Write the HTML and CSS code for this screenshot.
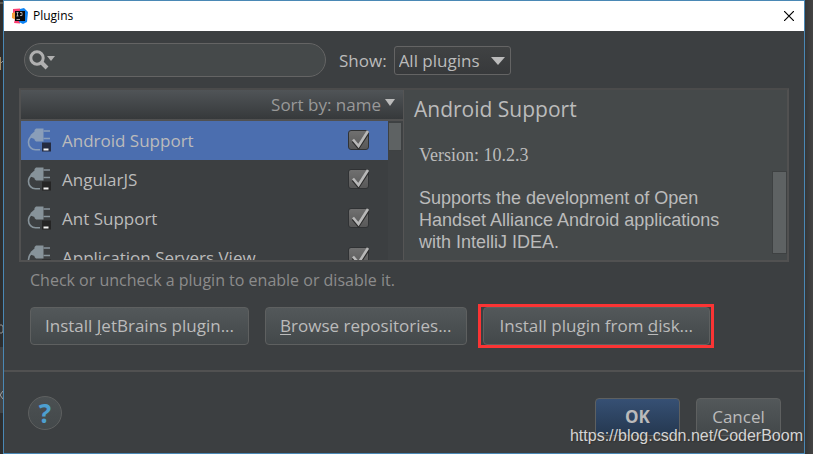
FILE: index.html
```
<!DOCTYPE html>
<html lang="en">
<head>
<meta charset="utf-8">
<title>Plugins</title>
<meta name="viewport" content="width=device-width, initial-scale=1">
<link rel="stylesheet" href="styles.css">
</head>
<body>
<svg class="symbols" aria-hidden="true">
  <symbol id="plug" viewBox="0 0 24 24">
    <path d="M5 8C2.500 9.500 1.500 12 1.500 14.500C1.500 18.500 4.500 21.700 8.500 21.700H13" fill="none" stroke="currentColor" stroke-width="1.600"/>
    <path d="M3.500 7L7.500 3.500V2L9 0.500H16.500V13.500H9L7.500 12V11L3.500 9.500Z" fill="currentColor"/>
    <path d="M16.500 3H23M16.500 10.500H23" stroke="currentColor" stroke-width="1.500"/>
    <path d="M15 14.500H24V23.500H15Z"/>
    <path d="M16.500 20.500H21.500V22.500H16.500Z" fill="#f2f2f2"/>
  </symbol>
  <symbol id="tick" viewBox="0 0 22 22">
    <path d="M5 11L10.500 17.500L20 3" fill="none" stroke="#2c2c2c" stroke-width="3"/>
    <path d="M5 9.500L10.500 16L20 1" fill="none" stroke="#b8b8b8" stroke-width="2.600"/>
  </symbol>
</svg>
<div class="desktop">
  <svg class="behind" viewBox="0 0 3 454" aria-hidden="true">
    <path d="M0 3H3" stroke="#8a8170"/>
    <path d="M0 57H1V70H0Z" fill="#a58b62"/>
    <path d="M1 63L3 61" stroke="#8f8f8f"/>
    <path d="M0 325H2L3 327V331L2 333H0" stroke="#8f8f8f" fill="none"/>
    <path d="M0 347H3V413H0Z" fill="#414345"/>
    <path d="M3 391L0 395L3 399" stroke="#a0a0a0" fill="none"/>
  </svg>
  <main class="window">
    <header class="titlebar">
      <svg class="logo" viewBox="0 0 16 16" aria-hidden="true">
        <path d="M1 1L8 0.500V15.500L2 15L3 11L0 9L1 6Z" fill="#fb3f72"/>
        <path d="M0 5L4 4V12L0 10Z" fill="#f8a13c"/>
        <path d="M8 1L12 0L16 4L15 14L11 16L7 14Z" fill="#0d83f4"/>
        <path d="M3 3H13V13H3Z" fill="#0a0a0a"/>
        <path d="M4.500 4.500H6.500M5.500 4.500V8M4.500 8H6.500M8 4.500H10V7.500H8M4.500 11.500H8" stroke="#ccc" stroke-width="0.800" fill="none"/>
      </svg>
      <h1>Plugins</h1>
      <button class="close" aria-label="Close"><svg viewBox="0 0 10 10"><path d="M0 0L10 10M10 0L0 10" stroke="#000" stroke-width="1.200"/></svg></button>
    </header>
    <div class="filters">
      <label class="search">
        <svg viewBox="0 0 28 20" aria-hidden="true"><circle cx="8" cy="8" r="6.200" fill="none" stroke="#b0b0b0" stroke-width="3"/><path d="M12 12L18 18" stroke="#b0b0b0" stroke-width="4"/><path d="M18 6H26L22 11Z" fill="#b0b0b0"/></svg>
        <input type="text" aria-label="Search plugins">
      </label>
      <label class="show" for="show">Show:</label>
      <span class="picker">
        <select id="show"><option>All plugins</option></select>
        <svg viewBox="0 0 14 8" aria-hidden="true"><path d="M0 0H14L7 8Z" fill="#bbb"/></svg>
      </span>
    </div>
    <section class="panes">
      <div class="plugins">
        <button class="sort">Sort by: name<svg viewBox="0 0 10 7" aria-hidden="true"><path d="M0 0H10L5 7Z" fill="#bbb"/></svg></button>
        <div class="scroller">
          <ul>
            <li class="selected"><svg class="plug"><use href="#plug"/></svg><label for="p1">Android Support</label><span class="check"><input type="checkbox" id="p1" checked><svg><use href="#tick"/></svg></span></li>
            <li><svg class="plug"><use href="#plug"/></svg><label for="p2">AngularJS</label><span class="check"><input type="checkbox" id="p2" checked><svg><use href="#tick"/></svg></span></li>
            <li><svg class="plug"><use href="#plug"/></svg><label for="p3">Ant Support</label><span class="check"><input type="checkbox" id="p3" checked><svg><use href="#tick"/></svg></span></li>
            <li><svg class="plug"><use href="#plug"/></svg><label for="p4">Application Servers View</label><span class="check"><input type="checkbox" id="p4" checked><svg><use href="#tick"/></svg></span></li>
          </ul>
          <div class="track"><div class="thumb"></div></div>
        </div>
      </div>
      <article class="detail">
        <div class="copy">
          <h2>Android Support</h2>
          <p class="version">Version: 10.2.3</p>
          <p class="about">Supports the development of Open Handset Alliance Android applications with IntelliJ IDEA.</p>
        </div>
        <div class="thumb"></div>
      </article>
    </section>
    <p class="hint">Check or uncheck a plugin to enable or disable it.</p>
    <div class="sources">
      <button class="btn"><span>Install <u>J</u>etBrains plugin...</span></button>
      <button class="btn"><span><u>B</u>rowse repositories...</span></button>
      <div class="marked"><button class="btn"><span>Install plugin from <u>d</u>isk...</span></button></div>
    </div>
    <footer>
      <button class="help" aria-label="Help">?</button>
      <button class="btn ok">OK</button>
      <button class="btn cancel">Cancel</button>
    </footer>
  </main>
  <div class="watermark">https://blog.csdn.net/CoderBoom</div>
</div>
</body>
</html>
```
FILE: styles.css
```
* { box-sizing: border-box; }
body {
  margin: 0;
  background: #3c3f41;
  color: #bbb;
  font: 17px/24px "Open Sans", "Noto Sans", sans-serif;
}
h1, h2, p, ul { margin: 0; padding: 0; font-weight: 400; }
button, input, select { font: inherit; color: inherit; margin: 0; }
svg { display: block; }
u { text-underline-offset: 2px; text-decoration-thickness: 1px; }
.symbols { position: absolute; width: 0; height: 0; }

.desktop {
  position: relative;
  display: flex;
  min-height: 100vh;
  padding-right: 8px;
  background: linear-gradient(to left, #444, #343637 8px);
}
.behind { width: 3px; height: 454px; background: #2d2e2f; }
.window {
  flex: 1;
  display: flex;
  flex-direction: column;
  border: 1px solid #4a88b5;
  background: #3c3f41;
}

.titlebar {
  display: flex;
  align-items: center;
  height: 30px;
  padding: 0 10px 0 8px;
  background: #fff;
  color: #000;
}
.logo { width: 16px; height: 16px; margin-right: 5px; }
.titlebar h1 { flex: 1; font-size: 12px; line-height: 16px; }
.close { padding: 0; border: 0; background: none; }
.close svg { width: 10px; height: 10px; }

.filters { display: flex; align-items: center; padding: 12px 20px 0; }
.search {
  display: flex;
  align-items: center;
  width: 302px;
  height: 34px;
  padding: 0 16px 0 4px;
  border: 1px solid #646464;
  border-radius: 17px;
  background: #45494a;
}
.search svg { width: 28px; height: 20px; flex: none; }
.search input { flex: 1; min-width: 0; border: 0; background: none; outline: 0; }
.show { margin: 2px 7px 0 13px; }
.picker { position: relative; margin-top: 1px; }
.picker select {
  display: block;
  width: 117px;
  height: 29px;
  padding: 0 0 0 4px;
  appearance: none;
  border: 1px solid #646464;
  border-radius: 3px;
  background: linear-gradient(#404243, #37393b);
}
.picker svg { position: absolute; right: 6px; top: 11px; width: 14px; height: 8px; pointer-events: none; }

.panes {
  display: flex;
  margin: 11px 15px 0;
  border: 2px solid #515151;
  border-top-color: #4b4b4b;
}
.plugins { width: 382px; display: flex; flex-direction: column; }
.sort {
  display: flex;
  justify-content: flex-end;
  align-items: center;
  height: 31px;
  padding: 0 8px 0 0;
  border: 0;
  border-bottom: 2px solid #515151;
  background: linear-gradient(#505457, #36393b);
  color: #999;
}
.sort svg { width: 10px; height: 7px; margin: 0 0 4px 4px; }
.scroller { display: flex; height: 139px; overflow: hidden; }
.scroller ul { flex: 1; list-style: none; }
.scroller li { display: flex; align-items: center; height: 39px; padding: 0 19px 0 6px; }
.scroller label { flex: 1; }
.selected { background: #4b6eaf; }
.plug { width: 24px; height: 24px; margin: 0 11px 1px 0; color: #87939a; fill: #252525; }
.selected .plug { color: #8a9eb9; fill: #252b40; }
.check { position: relative; margin-bottom: 1px; }
.check input {
  display: block;
  width: 21px;
  height: 20px;
  appearance: none;
  border: 1px solid #303234;
  border-radius: 3px;
  background: linear-gradient(#707070, #585858);
}
.check svg { position: absolute; left: 0; top: 0; width: 22px; height: 22px; pointer-events: none; }
.track { width: 15px; padding: 1px 1px 0 0; background: #3f4244; }
.thumb { width: 14px; background: #5e6263; border: 1px solid #3e4142; }
.track .thumb { height: 29px; }

.detail {
  flex: 1;
  display: flex;
  justify-content: space-between;
  align-items: flex-end;
  border-left: 1px solid #555;
  background: #45494a;
}
.copy { flex: 1; align-self: flex-start; padding: 4px 40px 0 10px; }
.copy h2 { font-size: 21px; line-height: 30px; }
.copy p { margin-left: 5px; }
.copy .version { margin-top: 20px; font: 18px/22px "Liberation Serif", serif; }
.copy .about { margin-top: 21px; font: 18px/22px "Liberation Sans", sans-serif; }
.detail .thumb { width: 15px; height: 83px; margin-bottom: 6px; }

.hint { margin: 6px 26px 0; font-size: 16px; color: #8c8c8c; }
.sources { display: flex; align-items: center; padding: 12px 26px 0; }
.btn {
  height: 38px;
  padding: 0 14px;
  border: 1px solid #5e6060;
  border-radius: 4px;
  background: linear-gradient(#53585a, #43484a);
  white-space: nowrap;
}
.sources > .btn { margin-right: 16px; }
.marked { margin-left: -5px; padding: 0 1px 0 2px; border: 3px solid #fb3434; }
.marked .btn { display: block; padding: 0 16px; }

footer {
  flex: 1;
  display: flex;
  align-items: flex-start;
  margin-top: 22px;
  padding: 24px 23px 0 24px;
  border-top: 2px solid #515151;
}
.help {
  width: 34px;
  height: 34px;
  margin-right: auto;
  padding: 0;
  border: 1px solid #5e6060;
  border-radius: 50%;
  background: linear-gradient(#4b5052, #44494b);
  color: #4d9fd0;
  font-size: 26px;
  font-weight: 700;
  line-height: 30px;
}
footer .btn { width: 85px; margin-top: 2px; padding: 0; }
.ok { background: linear-gradient(#365074, #253850); font-weight: 700; }
.cancel { margin-left: 16px; }

.watermark {
  position: absolute;
  right: 10px;
  bottom: 8px;
  color: #d4d4d4;
  font: 16px/20px "Liberation Sans", sans-serif;
  text-shadow: 1px 1px 1px #333;
}
```
